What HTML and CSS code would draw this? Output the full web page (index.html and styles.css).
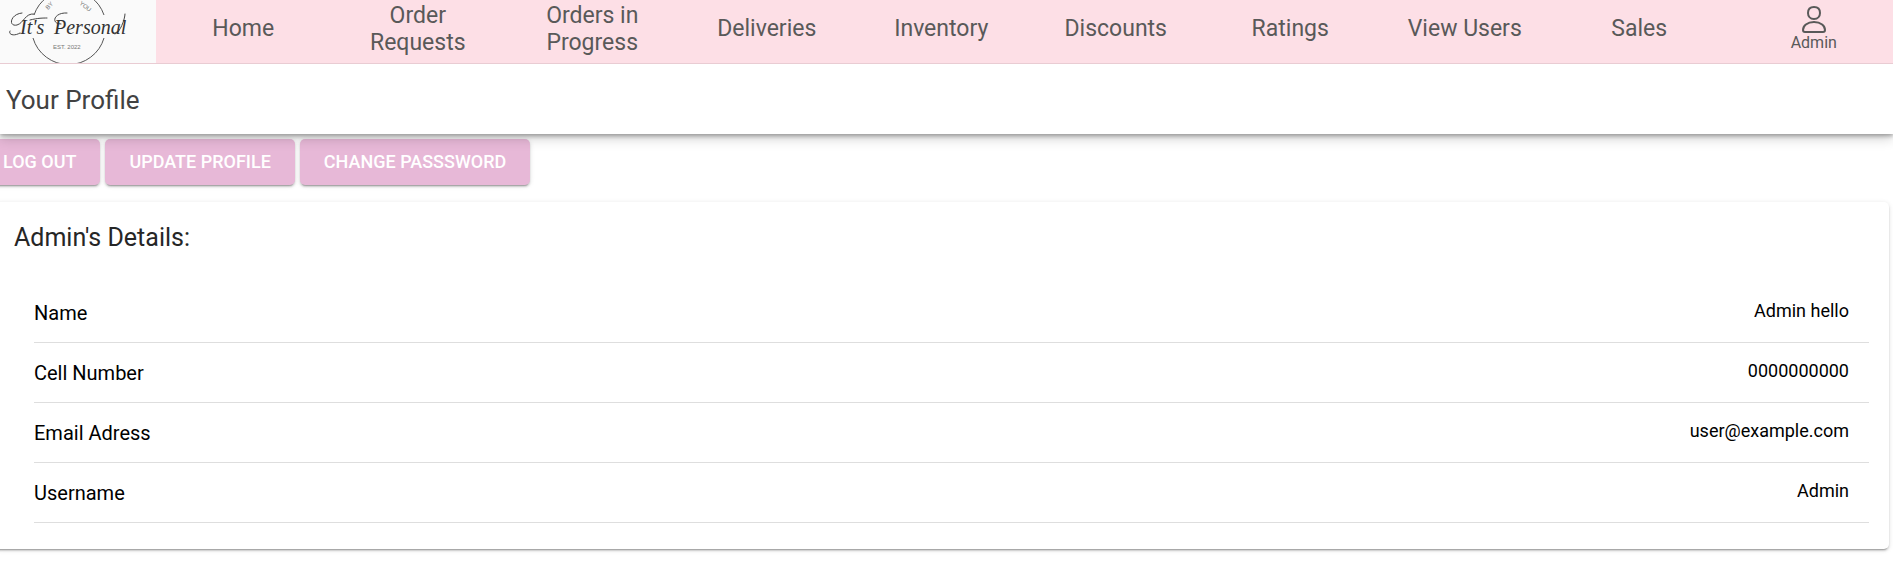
FILE: index.html
```html
<!DOCTYPE html>
<html lang="en">
<head>
<meta charset="utf-8">
<meta name="viewport" content="width=device-width, initial-scale=1">
<title>Your Profile</title>
<link rel="stylesheet" href="styles.css">
</head>
<body>
<header class="topbar">
  <a class="logo" href="#">
    <svg class="logo-art" viewBox="0 0 156 63" role="img" aria-label="It's Personal">
      <g fill="none" stroke="#555" stroke-width="1">
        <path d="M33 38A37 37 0 0 0 104 38"/>
        <path d="M34 15A37 37 0 0 1 104 15"/>
      </g>
      <g fill="none" stroke="#444" stroke-width="1" stroke-linecap="round">
        <path d="M22 13C10 14 8 27 17 25C24 23 25 13 34 14"/>
        <path d="M20 33C13 37 8 34 10 31"/>
        <path d="M61 24C50 24 54 12 67 13"/>
        <path d="M115 34C120 33 125 19 125 14"/>
        <path d="M30 20C38 18 43 18 47 18"/>
      </g>
      <text class="logo-name" x="20" y="34">It's</text>
      <text class="logo-name" x="54" y="34">Personal</text>
      <text class="logo-small" x="53" y="49">EST. 2022</text>
      <text class="logo-small" transform="translate(48 10) rotate(-46)">BY</text>
      <text class="logo-small" transform="translate(79 4) rotate(38)">YOU</text>
    </svg>
  </a>
  <nav class="tabs">
    <a class="tab" href="#">Home</a>
    <a class="tab" href="#">Order Requests</a>
    <a class="tab" href="#">Orders in Progress</a>
    <a class="tab" href="#">Deliveries</a>
    <a class="tab" href="#">Inventory</a>
    <a class="tab" href="#">Discounts</a>
    <a class="tab" href="#">Ratings</a>
    <a class="tab" href="#">View Users</a>
    <a class="tab" href="#">Sales</a>
    <a class="tab tab-user" href="#">
      <svg class="user-icon" viewBox="0 0 26 28" aria-hidden="true">
        <g fill="none" stroke="#595959" stroke-width="2" stroke-linejoin="round">
          <path d="M13 2C9 2 7 4 7 8C7 11 9 14 13 14C17 14 19 11 19 8C19 4 17 2 13 2Z"/>
          <path d="M13 17C6 17 2 21 2 25Q2 27 4 27H22Q24 27 24 25C24 21 20 17 13 17Z"/>
        </g>
      </svg>
      <span>Admin</span>
    </a>
  </nav>
</header>
<div class="titlebar"><h1 class="title">Your Profile</h1></div>
<main class="content">
  <div class="actions">
    <button class="btn" type="button">LOG OUT</button>
    <button class="btn" type="button">UPDATE PROFILE</button>
    <button class="btn" type="button">CHANGE PASSSWORD</button>
  </div>
  <section class="card">
    <h2 class="card-title">Admin's Details:</h2>
    <dl class="details">
      <div class="row"><dt>Name</dt><dd>Admin hello</dd></div>
      <div class="row"><dt>Cell Number</dt><dd>0000000000</dd></div>
      <div class="row"><dt>Email Adress</dt><dd>user@example.com</dd></div>
      <div class="row"><dt>Username</dt><dd>Admin</dd></div>
    </dl>
  </section>
</main>
</body>
</html>
```
FILE: styles.css
```css
* { box-sizing: border-box; }
body {
  margin: 0;
  overflow-x: hidden;
  background: #fff;
  color: #000;
  font-family: Roboto, "Liberation Sans", sans-serif;
}
.topbar {
  display: flex;
  height: 64px;
  overflow: hidden;
  background: #fddfe6;
  border-bottom: 1px solid #e9ccd3;
}
.logo { flex: none; width: 156px; background: #fafafa; }
.logo-art { display: block; width: 156px; height: 63px; }
.logo-name { font: italic 20px "Liberation Serif", serif; fill: #333; }
.logo-small { font: 6px "Liberation Sans", sans-serif; fill: #777; }
.tabs {
  flex: 1;
  display: grid;
  grid-template-columns: repeat(10, 1fr);
  margin-right: -8px;
}
.tab {
  display: flex;
  align-items: center;
  justify-content: center;
  padding: 0 24px 6px;
  color: #595959;
  font-size: 23px;
  line-height: 27px;
  text-align: center;
  text-decoration: none;
}
.tab-user {
  flex-direction: column;
  font-size: 16px;
  line-height: 20px;
}
.user-icon { width: 26px; height: 28px; }
.titlebar {
  position: relative;
  padding: 21px 6px 19px;
  background: #fff;
  box-shadow: 0 2px 4px rgba(0, 0, 0, .3), 0 4px 12px rgba(0, 0, 0, .2);
}
.title {
  margin: 0;
  color: #424242;
  font-size: 26px;
  font-weight: 400;
  line-height: 30px;
}
.topbar { position: relative; z-index: 1; }
.actions { display: flex; gap: 5px; margin-left: -21px; padding-top: 5px; }
.btn {
  height: 46px;
  padding: 0 24px;
  border: 0;
  border-radius: 5px;
  background: #e7b8d7;
  color: #fff;
  font: 500 18px/24px Roboto, "Liberation Sans", sans-serif;
  box-shadow: 0 3px 1px -2px rgba(0, 0, 0, .2), 0 2px 2px rgba(0, 0, 0, .14), 0 1px 5px rgba(0, 0, 0, .12);
}
.card {
  margin: 17px 4px 20px -6px;
  padding: 21px 20px 20px;
  border-radius: 5px;
  box-shadow: 0 3px 1px -2px rgba(0, 0, 0, .2), 0 2px 2px rgba(0, 0, 0, .14), 0 1px 5px rgba(0, 0, 0, .12);
}
.card-title {
  margin: 0;
  color: #262626;
  font-size: 25px;
  font-weight: 400;
  line-height: 30px;
}
.details { margin: 30px 0 6px 20px; }
.row {
  display: flex;
  justify-content: space-between;
  height: 60px;
  padding: 16px 20px 0 0;
  border-bottom: 1px solid #dedede;
}
.row dt { font-size: 20px; line-height: 28px; }
.row dd { margin: 0; font-size: 18px; line-height: 24px; }
```
